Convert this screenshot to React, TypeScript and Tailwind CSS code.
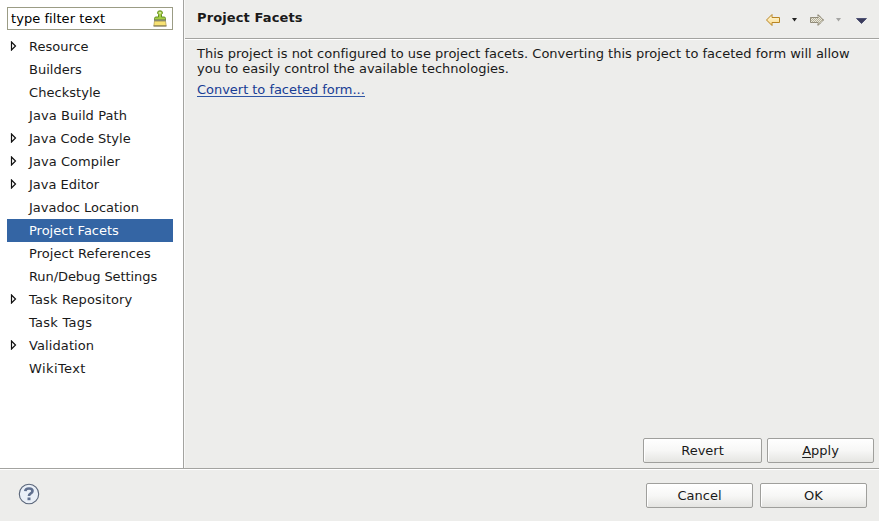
import React from "react";

type Item = { label: string; expandable?: boolean; selected?: boolean; tracking?: string };

const items: Item[] = [
  { label: "Resource", expandable: true },
  { label: "Builders" },
  { label: "Checkstyle", tracking: "tracking-[0.05px]" },
  { label: "Java Build Path", tracking: "tracking-[0.07px]" },
  { label: "Java Code Style", expandable: true },
  { label: "Java Compiler", expandable: true, tracking: "tracking-[0.07px]" },
  { label: "Java Editor", expandable: true },
  { label: "Javadoc Location" },
  { label: "Project Facets", selected: true },
  { label: "Project References", tracking: "tracking-[0.05px]" },
  { label: "Run/Debug Settings", tracking: "tracking-[-0.08px]" },
  { label: "Task Repository", expandable: true, tracking: "tracking-[0.14px]" },
  { label: "Task Tags", tracking: "tracking-[0.25px]" },
  { label: "Validation", expandable: true, tracking: "tracking-[0.1px]" },
  { label: "WikiText", tracking: "tracking-[0.4px]" },
];

function BrushIcon() {
  return (
    <svg width="16" height="17" viewBox="0 0 16 17" className="shrink-0">
      <path d="M6.500 7V4.500Q5.500 3.800 5.500 2.600Q5.500 .8 8 .8Q10.500 .8 10.500 2.600Q10.500 3.800 9.500 4.500V7H12Q13.500 7 13.500 8.500V10H2.500V8.500Q2.500 7 4 7Z" fill="#a5cf43" stroke="#658f22" />
      <path d="M7.300 2.300H8.700V3.500H7.300Z" fill="#fff" />
      <path d="M2.500 11H13.500L14.200 15.800H1.800Z" fill="#f8e273" stroke="#b29d4e" strokeWidth=".7" />
      <path d="M2 9.500H14V11.200H2Z" fill="#878970" />
      <path d="M1.500 16H14.500" stroke="#716846" />
    </svg>
  );
}

function Arrow({ forward }: { forward?: boolean }) {
  return (
    <svg width="16" height="14" viewBox="0 0 16 14" className={forward ? "-scale-x-100" : ""}>
      <defs>
        <linearGradient id="gold" x1="0" y1="0" x2="0" y2="1">
          <stop offset="0" stopColor="#fffbe0" />
          <stop offset="1" stopColor="#fbd98a" />
        </linearGradient>
        <pattern id="dither" width="2" height="2" patternUnits="userSpaceOnUse">
          <path d="M0 0H2V2H0Z" fill="#eae8da" />
          <path d="M0 0H1V1H0ZM1 1H2V2H1Z" fill="#b5b09b" />
        </pattern>
      </defs>
      <path
        d="M1.500 7L7 1.500V4.500H14.500V9.500H7V12.500Z"
        fill={forward ? "url(#dither)" : "url(#gold)"}
        stroke={forward ? "#79725d" : "#b98522"}
        strokeDasharray={forward ? "1.5 .5" : undefined}
        strokeLinejoin="round"
      />
    </svg>
  );
}

function Button({ children, className }: { children: React.ReactNode; className: string }) {
  return (
    <button
      className={`h-[25px] rounded-[2px] border border-[#9f9f9c] bg-linear-to-b from-white via-[#f7f7f6] to-[#e5e5e2] text-center leading-[23px] shadow-[inset_1px_1px_0_#fff] ${className}`}
    >
      {children}
    </button>
  );
}

export default function App() {
  return (
    <div className="flex h-[521px] w-[879px] flex-col overflow-hidden bg-[#ededeb] font-['DejaVu_Sans',sans-serif] text-[13px] text-[#1a1a1a]">
      <div className="flex h-[468px]">
        <aside className="w-[184px] shrink-0 border-r border-[#a3a3a0] bg-white pt-[7px] pl-[7px]">
          <div className="flex h-[23px] w-[166px] items-center justify-between border border-[#9b9c85] bg-white pr-[4px] pl-[3px] text-black">
            <span className="tracking-[0.06px]">type filter text</span>
            <BrushIcon />
          </div>
          <ul className="mt-[5px] w-[166px]">
            {items.map((item) => (
              <li
                key={item.label}
                className={`flex h-[23px] items-center whitespace-nowrap ${item.tracking ?? ""} ${item.selected ? "bg-[#3465a4] text-white" : ""}`}
              >
                <span className="flex w-[22px] shrink-0 pb-[2px] pl-[3px]">
                  {item.expandable && (
                    <svg width="7" height="10" viewBox="0 0 7 10">
                      <path d="M1.500 1V9L5.500 5Z" fill="white" stroke="#111" strokeWidth="1.200" />
                    </svg>
                  )}
                </span>
                {item.label}
              </li>
            ))}
          </ul>
        </aside>
        <main className="flex flex-1 flex-col border-l border-[#f8f8f7]">
          <header className="flex h-[39px] shrink-0 justify-between border-b border-[#a3a3a0] pl-[12px]">
            <h1 className="pt-[10px] leading-[15px] font-bold tracking-[0.12px]">Project Facets</h1>
            <div className="flex h-[40px] items-center pr-[12px]">
              <Arrow />
              <svg width="6" height="4" className="mr-[11px] ml-[11px]"><path d="M0 0H5L2.500 3.500Z" fill="#222" /></svg>
              <Arrow forward />
              <svg width="6" height="4" className="mr-[14px] ml-[11px]"><path d="M0 0H5L2.500 3.500Z" fill="#a5a5a3" /></svg>
              <svg width="11" height="6" className="mt-px"><path d="M.5 .5H10.500L5.500 5.500Z" fill="#3b3c5c" stroke="#303560" strokeWidth=".7" /></svg>
            </div>
          </header>
          <section className="flex flex-1 flex-col items-start border-t border-white pt-[6px] pl-[12px]">
            <p className="leading-[15px] tracking-[0.01px] whitespace-nowrap">
              This project is not configured to use project facets. Converting this project to faceted form will allow
              <br />
              you to easily control the available technologies.
            </p>
            <a className="mt-[6px] h-[15px] border-b border-[#2f55a4] leading-[15px] tracking-[-0.03px] text-[#173c94]">Convert to faceted form...</a>
          </section>
          <div className="flex justify-end gap-[5px] pr-[5px] pb-[5px]">
            <Button className="w-[119px]">Revert</Button>
            <Button className="w-[107px]"><span className="underline underline-offset-2">A</span>pply</Button>
          </div>
        </main>
      </div>
      <footer className="flex flex-1 items-start justify-between border-t border-[#a3a3a0] pr-[12px] pl-[18px] shadow-[inset_0_1px_0_white]">
        <svg width="22" height="22" viewBox="0 0 22 22" className="mt-[14px]">
          <circle cx="11" cy="11" r="9.700" fill="#e9eff7" stroke="#596579" strokeWidth="1.100" />
          <path d="M7.300 8.200Q7.500 5.500 11 5.500Q14.500 5.500 14.500 8Q14.500 9.500 12.500 10.600Q11 11.400 11 13" fill="none" stroke="#60708f" strokeWidth="2.700" />
          <path d="M9.500 14.500H12.500V17.200H9.500Z" fill="#60708f" />
        </svg>
        <div className="flex gap-[7px] pt-[14px]">
          <Button className="w-[107px]">Cancel</Button>
          <Button className="w-[107px]">OK</Button>
        </div>
      </footer>
    </div>
  );
}
